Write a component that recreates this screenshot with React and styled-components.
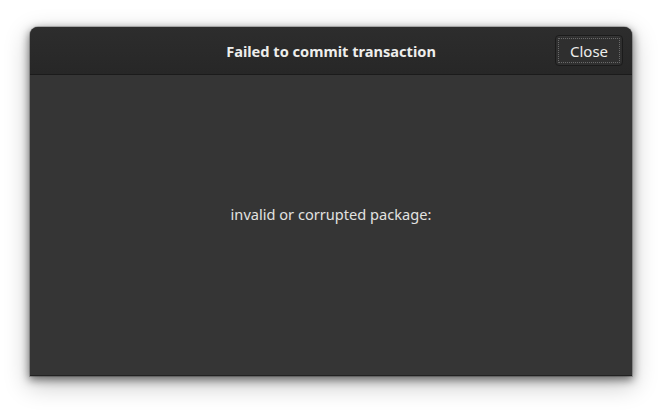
import * as React from 'react';
import styled, { createGlobalStyle } from 'styled-components';

const GlobalStyle = createGlobalStyle`
  html, body {
    margin: 0;
    padding: 0;
    background: #ffffff;
  }
  body {
    font-family: "Noto Sans", "Open Sans", sans-serif;
  }
`;

function App() {
  return (
    <Page>
      <GlobalStyle />
      <Dialog>
        <HeaderBar>
          <Title>Failed to commit transaction</Title>
          <CloseButton>Close</CloseButton>
        </HeaderBar>
        <Content>
          <Message>invalid or corrupted package:</Message>
        </Content>
      </Dialog>
    </Page>
  );
}

export default App;

const Page = styled.div`
  width: 666px;
  height: 413px;
  box-sizing: border-box;
  padding: 27px 34px 37px 30px;
`;

const Dialog = styled.div`
  width: 602px;
  height: 349px;
  display: flex;
  flex-direction: column;
  border-radius: 8px 8px 0 0;
  overflow: hidden;
  background: #353535;
  border-bottom: 1px solid #222;
  box-sizing: border-box;
  box-shadow: 0 3px 8px 1px rgba(0, 0, 0, 0.5), 0 8px 24px 2px rgba(0, 0, 0, 0.22),
    0 0 0 1px rgba(0, 0, 0, 0.2);
`;

const HeaderBar = styled.div`
  position: relative;
  height: 47px;
  flex: 0 0 auto;
  display: flex;
  align-items: center;
  justify-content: center;
  background: linear-gradient(#2d2d2d, #272727);
  border-bottom: 1px solid #1b1b1b;
`;

const Title = styled.div`
  color: #eeeeec;
  font-size: 14.6px;
  font-weight: 700;
`;

const CloseButton = styled.button`
  position: absolute;
  right: 9px;
  top: 8px;
  width: 68px;
  height: 31px;
  box-sizing: border-box;
  border: 1px solid #1b1b1b;
  border-radius: 4px;
  background: #2f2f2f;
  color: #eeeeec;
  font-family: "Noto Sans", "Open Sans", sans-serif;
  font-size: 15px;
  padding: 0;
  outline: 1px dotted #6a6a6a;
  outline-offset: -4px;
  box-shadow: inset 0 1px rgba(255, 255, 255, 0.03);
`;

const Content = styled.div`
  flex: 1;
  display: flex;
  align-items: center;
  justify-content: center;
  padding-bottom: 22px;
`;

const Message = styled.div`
  color: #e2e2e0;
  font-size: 14.6px;
`;
